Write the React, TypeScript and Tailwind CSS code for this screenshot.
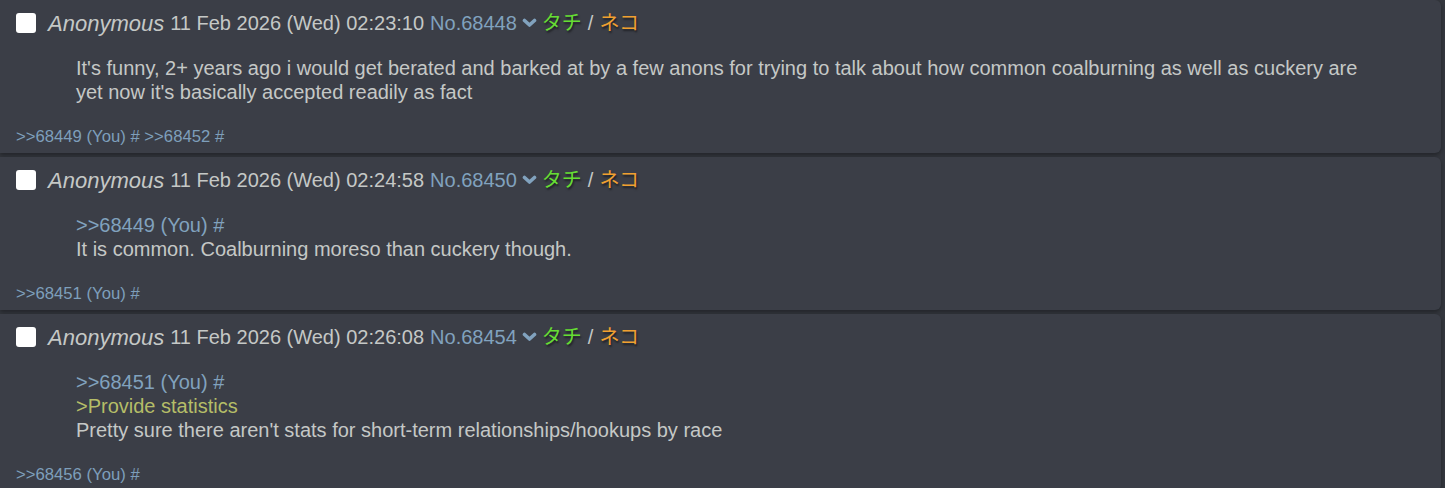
import React from "react";

type Line = { kind: "quote" | "green" | "text"; text: string };

type Post = {
  no: string;
  time: string;
  body: Line[];
  backlinks: string;
};

const posts: Post[] = [
  {
    no: "68448",
    time: "02:23:10",
    body: [
      {
        kind: "text",
        text: "It's funny, 2+ years ago i would get berated and barked at by a few anons for trying to talk about how common coalburning as well as cuckery are yet now it's basically accepted readily as fact",
      },
    ],
    backlinks: ">>68449 (You) # >>68452 #",
  },
  {
    no: "68450",
    time: "02:24:58",
    body: [
      { kind: "quote", text: ">>68449 (You) #" },
      { kind: "text", text: "It is common. Coalburning moreso than cuckery though." },
    ],
    backlinks: ">>68451 (You) #",
  },
  {
    no: "68454",
    time: "02:26:08",
    body: [
      { kind: "quote", text: ">>68451 (You) #" },
      { kind: "green", text: ">Provide statistics" },
      { kind: "text", text: "Pretty sure there aren't stats for short-term relationships/hookups by race" },
    ],
    backlinks: ">>68456 (You) #",
  },
];

function Chevron() {
  return (
    <svg width="15" height="10" viewBox="0 0 15 10" className="mx-[5px] inline-block">
      <polyline points="2.5,2.5 7.5,7 12.5,2.5" fill="none" stroke="#81a2be" strokeWidth="3.6" strokeLinecap="round" strokeLinejoin="round" />
    </svg>
  );
}

function PostCard({ post }: { post: Post }) {
  const lineClass = {
    quote: "text-[#81a2be]",
    green: "text-[#b5bd68]",
    text: "text-[#c5c8c6]",
  };
  return (
    <div className="rounded-r-md bg-[#3b3e47] pr-[60px] pb-[6px] pt-[8px] shadow-[0_2px_4px_rgba(0,0,0,0.35)]">
      <div className="flex h-[30px] items-center pl-[16px] text-[20px] text-[#c5c8c6]">
        <span className="mr-[12px] h-[20px] w-[20px] rounded-[3px] bg-white" />
        <span className="text-[22px] italic">Anonymous</span>
        <span className="ml-[6px]">11 Feb 2026 (Wed) {post.time}</span>
        <span className="ml-[6px] text-[#81a2be]">No.{post.no}</span>
        <Chevron />
        <span className="text-[#66dd33] [text-shadow:1px_2px_2px_rgba(0,0,0,0.5)]">タチ</span>
        <span className="mx-[6px]">/</span>
        <span className="text-[#f0a030] [text-shadow:1px_2px_2px_rgba(0,0,0,0.5)]">ネコ</span>
      </div>
      <div className="mt-[18px] pl-[76px] text-[20px] leading-[24px]">
        {post.body.map((l, i) => (
          <div key={i} className={lineClass[l.kind]}>
            {l.text}
          </div>
        ))}
      </div>
      <div className="mt-[23px] pl-[16px] text-[16.7px] leading-[20px] text-[#7e9fbb]">{post.backlinks}</div>
    </div>
  );
}

export default function App() {
  return (
    <div className="min-h-[488px] w-[1445px] bg-[#34373e] pr-[4px] font-['Liberation_Sans','Noto_Sans_CJK_JP',sans-serif] antialiased">
      <div className="flex flex-col gap-[4px]">
        {posts.map((p) => (
          <PostCard key={p.no} post={p} />
        ))}
      </div>
    </div>
  );
}
